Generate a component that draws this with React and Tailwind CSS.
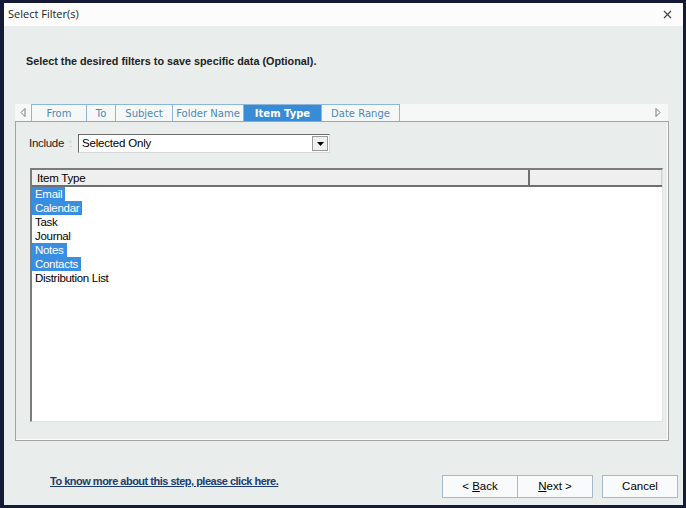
import React from 'react';

const tabs = ['From', 'To', 'Subject', 'Folder Name', 'Item Type', 'Date Range'];
const tabWidths = { 'From': 'w-[55px]', 'To': 'w-[29px]', 'Subject': 'w-[57px]', 'Folder Name': 'w-[71px]', 'Item Type': 'w-[78px]', 'Date Range': 'w-[79px]' };

const items = [
  { name: 'Email', selected: true },
  { name: 'Calendar', selected: true },
  { name: 'Task', selected: false },
  { name: 'Journal', selected: false },
  { name: 'Notes', selected: true },
  { name: 'Contacts', selected: true },
  { name: 'Distribution List', selected: false },
];

function TabStrip() {
  return (
    <div className="ml-[11px] w-[653px] h-[17px] bg-[#f6f8f8] flex items-stretch">
      <div className="w-[16px] flex items-center justify-center">
        <svg width="6" height="9" viewBox="0 0 6 9"><path d="M5 0.5 L1 4.5 L5 8.5 Z" fill="none" stroke="#7a7a7a" strokeWidth="1" /></svg>
      </div>
      {tabs.map((t) => {
        const active = t === 'Item Type';
        return (
          <div
            key={t}
            className={
              tabWidths[t] +
              ' flex items-center justify-center border-t border-l border-[#8cb6da] text-[10px] ' +
              (active ? 'bg-[#3a8bd5] text-white font-bold' : 'text-[#4d86ba]') +
              (t === 'Date Range' ? ' border-r' : '')
            }
            style={{ fontFamily: '"DejaVu Sans", sans-serif' }}
          >
            {t}
          </div>
        );
      })}
      <div className="flex-1 flex items-center justify-end pr-[7px]">
        <svg width="6" height="9" viewBox="0 0 6 9"><path d="M1 0.5 L5 4.5 L1 8.5 Z" fill="none" stroke="#7a7a7a" strokeWidth="1" /></svg>
      </div>
    </div>
  );
}

function IncludeRow() {
  return (
    <div className="flex items-center pl-[13px] pt-[12px]">
      <span className="text-[11.5px] text-[#222] tracking-[-0.3px]">Include</span>
      <span className="text-[11px] text-[#b8b8b8] ml-[5px]">:</span>
      <div className="ml-[6px] w-[252px] h-[19px] bg-white border border-t-[#6a6a6a] border-l-[#6a6a6a] border-r-[#d8d8d8] border-b-[#d8d8d8] flex items-center">
        <span className="flex-1 pl-[3px] text-[11.5px] text-black tracking-[-0.2px]">Selected Only</span>
        <div className="w-[16px] h-[15px] mr-[1px] bg-[#f0f0f0] border border-[#9a9a9a] flex items-center justify-center">
          <svg width="7" height="4" viewBox="0 0 7 4"><path d="M0 0 H7 L3.5 4 Z" fill="#000" /></svg>
        </div>
      </div>
    </div>
  );
}

function ItemList() {
  return (
    <div className="ml-[14px] mt-[15px] w-[633px] h-[254px] bg-white border-t-2 border-l-2 border-t-[#7c7c7c] border-l-[#7c7c7c] border-r border-b border-r-[#e2e2e2] border-b-[#e2e2e2] flex flex-col">
      <div className="h-[17px] flex bg-[#efefef] border-b-2 border-[#6f6f6f]">
        <div className="w-[498px] border-r-2 border-[#6f6f6f] pl-[5px] text-[11.5px] leading-[16px] text-black tracking-[-0.2px]">Item Type</div>
        <div className="flex-1 border-r border-[#cfcfcf]"></div>
      </div>
      <div className="flex-1 flex flex-col items-start">
        {items.map((it) => (
          <span
            key={it.name}
            className={
              'h-[14px] leading-[14px] px-[3px] text-[11.5px] tracking-[-0.3px] ' +
              (it.selected ? 'bg-[#3a8ee2] text-white' : 'text-black')
            }
          >
            {it.name}
          </span>
        ))}
      </div>
    </div>
  );
}

export default function App() {
  return (
    <div className="w-[686px] h-[508px] bg-[#151b36] pt-[3px] pl-[4px] pr-[3px] pb-[3px]" style={{ fontFamily: '"Liberation Sans", Arial, sans-serif' }}>
      <div className="w-full h-full bg-[#e9eeed] flex flex-col">
        <div className="h-[23px] bg-[#fcfcfc] flex items-center justify-between pl-[4px] pr-[11px]">
          <span className="text-[11px] text-[#222]" style={{ fontFamily: '"Open Sans", sans-serif' }}>Select Filter(s)</span>
          <svg width="9" height="9" viewBox="0 0 9 9"><path d="M1 1 L8 8 M8 1 L1 8" stroke="#444" strokeWidth="1.2" /></svg>
        </div>

        <div className="h-[78px] pl-[22px] pt-[28px]">
          <p className="text-[10.8px] leading-[14px] font-bold text-[#222]">Select the desired filters to save specific data (Optional).</p>
        </div>

        <TabStrip />

        <div className="ml-[11px] w-[654px] h-[320px] border border-[#a3a3a3] bg-[#e9eeed]">
          <div className="w-full h-full border border-[#fbfbfb] border-t-0 border-l-0">
            <IncludeRow />
            <ItemList />
          </div>
        </div>

        <div className="flex-1 flex items-start pl-[46px] pr-[5px] pt-[34px]">
          <a href="#" className="mt-[-1px] text-[11px] leading-[14px] font-bold tracking-[-0.5px] text-[#1f3c6e] underline">To know more about this step, please click here.</a>
          <div className="ml-auto flex">
            <button className="w-[76px] h-[23px] bg-[#f9fafb] border border-[#a9b9cb] text-[11.5px] text-black"><span>&lt; <u>B</u>ack</span></button>
            <button className="w-[75px] h-[23px] bg-[#f9fafb] border border-l-0 border-[#a9b9cb] text-[11.5px] text-black"><span><u>N</u>ext &gt;</span></button>
            <button className="ml-[9px] w-[76px] h-[23px] bg-[#f9fafb] border border-[#a9b9cb] text-[11.5px] text-black">Cancel</button>
          </div>
        </div>
      </div>
    </div>
  );
}
